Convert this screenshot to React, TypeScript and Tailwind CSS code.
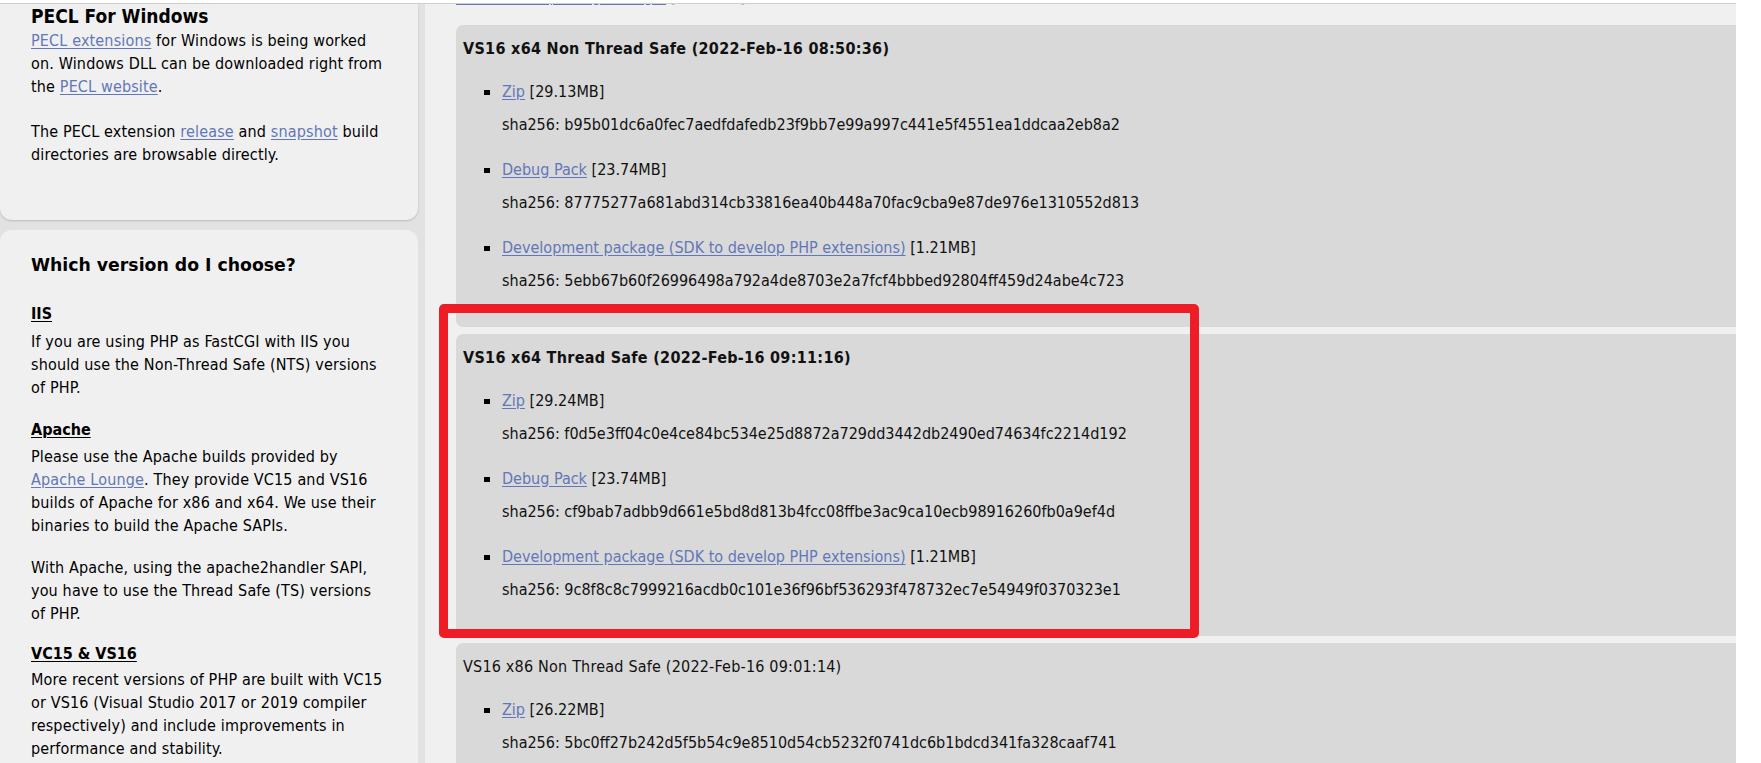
import { ReactNode } from "react";

const tahoma = "font-['DejaVu_Sans_Condensed','DejaVu_Sans',sans-serif]";
const verdana = "font-['DejaVu_Sans',sans-serif]";

type Download = { label: string; size: string; sha: string };
type Build = { title: string; bold: boolean; items: Download[] };

const builds: Build[] = [
    {
        title: "VS16 x64 Non Thread Safe (2022-Feb-16 08:50:36)",
        bold: true,
        items: [
            { label: "Zip", size: "[29.13MB]", sha: "b95b01dc6a0fec7aedfdafedb23f9bb7e99a997c441e5f4551ea1ddcaa2eb8a2" },
            { label: "Debug Pack", size: "[23.74MB]", sha: "87775277a681abd314cb33816ea40b448a70fac9cba9e87de976e1310552d813" },
            {
                label: "Development package (SDK to develop PHP extensions)",
                size: "[1.21MB]",
                sha: "5ebb67b60f26996498a792a4de8703e2a7fcf4bbbed92804ff459d24abe4c723",
            },
        ],
    },
    {
        title: "VS16 x64 Thread Safe (2022-Feb-16 09:11:16)",
        bold: true,
        items: [
            { label: "Zip", size: "[29.24MB]", sha: "f0d5e3ff04c0e4ce84bc534e25d8872a729dd3442db2490ed74634fc2214d192" },
            { label: "Debug Pack", size: "[23.74MB]", sha: "cf9bab7adbb9d661e5bd8d813b4fcc08ffbe3ac9ca10ecb98916260fb0a9ef4d" },
            {
                label: "Development package (SDK to develop PHP extensions)",
                size: "[1.21MB]",
                sha: "9c8f8c8c7999216acdb0c101e36f96bf536293f478732ec7e54949f0370323e1",
            },
        ],
    },
    {
        title: "VS16 x86 Non Thread Safe (2022-Feb-16 09:01:14)",
        bold: false,
        items: [
            { label: "Zip", size: "[26.22MB]", sha: "5bc0ff27b242d5f5b54c9e8510d54cb5232f0741dc6b1bdcd341fa328caaf741" },
        ],
    },
];

const A = ({ children }: { children: ReactNode }) => (
    <a href="#" className="text-[#6277b8] underline underline-offset-[2px]">
        {children}
    </a>
);

const SideHeading = ({ children, className }: { children: ReactNode; className: string }) => (
    <h4 className={`${className} text-[16px] leading-[22px] font-bold tracking-normal underline underline-offset-[2px]`}>
        {children}
    </h4>
);

function Sidebar() {
    return (
        <aside
            className={`${tahoma} w-[425px] shrink-0 bg-[#e2e2e2] pr-[7px] text-[16px] leading-[23px] tracking-[0.15px] text-black whitespace-nowrap`}
        >
            <div className="h-[216px] rounded-b-[12px] bg-[#f0f0f0] px-[31px] shadow-[0_1px_2px_rgba(0,0,0,0.18)]">
                <h3 className="text-[19px] leading-[24px] font-bold tracking-normal">PECL For Windows</h3>
                <p className="mt-[1px]">
                    <A>PECL extensions</A> for Windows is being worked
                    <br />
                    on. Windows DLL can be downloaded right from
                    <br />
                    the <A>PECL website</A>.
                </p>
                <p className="mt-[22px]">
                    The PECL extension <A>release</A> and <A>snapshot</A> build
                    <br />
                    directories are browsable directly.
                </p>
            </div>
            <div className="mt-[10px] h-[600px] rounded-t-[12px] bg-[#f0f0f0] px-[31px] pt-[23px]">
                <h3 className={`${verdana} text-[17.3px] leading-[24px] font-bold tracking-normal`}>
                    Which version do I choose?
                </h3>
                <SideHeading className="mt-[26px]">IIS</SideHeading>
                <p className="mt-[5px]">
                    If you are using PHP as FastCGI with IIS you
                    <br />
                    should use the Non-Thread Safe (NTS) versions
                    <br />
                    of PHP.
                </p>
                <SideHeading className="mt-[20px]">Apache</SideHeading>
                <p className="mt-[4px]">
                    Please use the Apache builds provided by
                    <br />
                    <A>Apache Lounge</A>. They provide VC15 and VS16
                    <br />
                    builds of Apache for x86 and x64. We use their
                    <br />
                    binaries to build the Apache SAPIs.
                </p>
                <p className="mt-[19px]">
                    With Apache, using the apache2handler SAPI,
                    <br />
                    you have to use the Thread Safe (TS) versions
                    <br />
                    of PHP.
                </p>
                <SideHeading className="mt-[18px]">VC15 &amp; VS16</SideHeading>
                <p className="mt-[3px]">
                    More recent versions of PHP are built with VC15
                    <br />
                    or VS16 (Visual Studio 2017 or 2019 compiler
                    <br />
                    respectively) and include improvements in
                    <br />
                    performance and stability.
                </p>
            </div>
        </aside>
    );
}

function BuildCard({ title, bold, items }: Build) {
    return (
        <section className="rounded-l-[7px] bg-[#d9d9d9] pt-[13px] pb-[35px] pl-[7px]">
            <h3
                className={`text-[16px] leading-[22px] ${bold ? "font-bold tracking-[0.3px]" : "font-normal tracking-[0.2px]"}`}
            >
                {title}
            </h3>
            <ul className="mt-[21px] flex flex-col gap-[23px]">
                {items.map(item => (
                    <li key={item.label} className="pl-[39px]">
                        <div className="relative leading-[22px]">
                            <span className="absolute -left-[18px] top-[9px] h-[5px] w-[6px] bg-black" />
                            <A>{item.label}</A> {item.size}
                        </div>
                        <p className="mt-[11px] leading-[22px]">sha256: {item.sha}</p>
                    </li>
                ))}
            </ul>
        </section>
    );
}

export default function App() {
    return (
        <div className="relative h-[763px] w-[1761px] overflow-hidden bg-white">
            <div className="h-[3px] w-[1736px] bg-white" />
            <div className="h-px w-[1736px] bg-[#cfcfcf]" />
            <div className="flex h-[759px] w-[1736px]">
                <Sidebar />
                <main className={`${tahoma} flex-1 bg-[#f0f0f0] pl-[31px] text-[16px] text-[#111] whitespace-nowrap`}>
                    <div className="h-[21px] overflow-hidden">
                        <div className="-mt-[18px] leading-[22px]">
                            <A>Source code package (tar.gz)</A> [25.62MB]
                        </div>
                    </div>
                    <div className="flex flex-col gap-[7px]">
                        {builds.map(b => (
                            <BuildCard key={b.title} {...b} />
                        ))}
                    </div>
                </main>
            </div>
            <div className="pointer-events-none absolute left-[439px] top-[304px] h-[334px] w-[760px] rounded-[5px] border-[9px] border-[#ee1c25]" />
        </div>
    );
}
